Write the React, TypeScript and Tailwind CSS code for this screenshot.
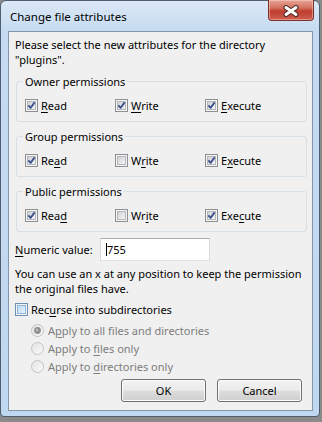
import React from 'react';

type Perm = { pre: string; key: string; post: string; checked: boolean };

const groups: { title: string; perms: Perm[] }[] = [
  {
    title: 'Owner permissions',
    perms: [
      { pre: '', key: 'R', post: 'ead', checked: true },
      { pre: '', key: 'W', post: 'rite', checked: true },
      { pre: '', key: 'E', post: 'xecute', checked: true },
    ],
  },
  {
    title: 'Group permissions',
    perms: [
      { pre: 'Re', key: 'a', post: 'd', checked: true },
      { pre: 'W', key: 'r', post: 'ite', checked: false },
      { pre: 'E', key: 'x', post: 'ecute', checked: true },
    ],
  },
  {
    title: 'Public permissions',
    perms: [
      { pre: 'Rea', key: 'd', post: '', checked: true },
      { pre: 'Wr', key: 'i', post: 'te', checked: false },
      { pre: 'Exe', key: 'c', post: 'ute', checked: true },
    ],
  },
];

// Windows 7 style checkbox glyph
function CheckBox({ checked, hot = false }: { checked: boolean; hot?: boolean }) {
  const id = hot ? 'cbHot' : 'cbNorm';
  return (
    <svg width="13" height="13" viewBox="0 0 13 13" className="shrink-0">
      <defs>
        <linearGradient id={id} x1="0" y1="0" x2="1" y2="1">
          <stop offset="0" stopColor={hot ? '#b9d9f4' : '#cdd0d5'} />
          <stop offset="1" stopColor={hot ? '#eaf4fd' : '#f8f8f8'} />
        </linearGradient>
      </defs>
      <rect x="0.5" y="0.5" width="12" height="12" fill="#f5f5f5" stroke={hot ? '#6f8fb4' : '#8e8f8f'} />
      <rect x="2.5" y="2.5" width="8" height="8" fill={`url(#${id})`} stroke={hot ? '#8fb4d8' : '#b4b7bc'} />
      {checked && (
        <path d="M3.4 6.4 L5.6 8.9 L9.6 3.4" fill="none" stroke="#3b4f8a" strokeWidth="1.8" strokeLinejoin="round" />
      )}
    </svg>
  );
}

// disabled radio glyph
function Radio({ selected }: { selected: boolean }) {
  return (
    <svg width="13" height="13" viewBox="0 0 13 13" className="shrink-0">
      <defs>
        <linearGradient id="rdDis" x1="0" y1="0" x2="1" y2="1">
          <stop offset="0" stopColor="#e2e2e2" />
          <stop offset="1" stopColor="#fbfbfb" />
        </linearGradient>
      </defs>
      <circle cx="6.5" cy="6.5" r="6" fill="url(#rdDis)" stroke="#c3c3c3" />
      {selected && (
        <>
          <circle cx="6.5" cy="6.5" r="3.4" fill="#8f8f8f" />
          <circle cx="6" cy="6" r="1.4" fill="#b9b9b9" />
        </>
      )}
    </svg>
  );
}

function WinButton({ label }: { label: string }) {
  return (
    <button className="w-[85px] h-[23px] rounded-[3px] border border-[#707070] bg-[linear-gradient(#f2f2f2_0%,#ebebeb_48%,#dddddd_52%,#cfcfcf_100%)] shadow-[inset_0_0_0_1px_#fcfcfc] text-black leading-[15px]">
      {label}
    </button>
  );
}

export default function App() {
  return (
    <div className="w-[322px] h-[422px] bg-[#8a8a8a] overflow-hidden font-['Noto_Sans',sans-serif] text-[11px] leading-[15px] text-black">
      <div className="w-[320px] h-[417px] rounded-t-[6px] rounded-b-[4px] border border-[#4f5d6e] bg-[linear-gradient(#dbe8f6,#c6dbf1_30px,#bfd7f0)] flex flex-col">
        {/* Title bar */}
        <div className="h-[30px] shrink-0 flex items-start justify-between">
          <span className="pl-[9px] pt-[8px] text-[11.5px]">Change file attributes</span>
          <div className="-mt-[1px] mr-[5px] w-[46px] h-[21px] rounded-b-[4px] border border-t-0 border-[#7b3028] bg-[linear-gradient(#e8a597_0%,#d2705f_40%,#c03d2f_55%,#cc5e4e_100%)] shadow-[inset_0_0_0_1px_rgba(255,220,210,0.45)] flex items-center justify-center">
            <svg width="16" height="12" viewBox="0 0 16 12" className="mt-[2px]">
              <path d="M3 2.5 L13 9.5 M13 2.5 L3 9.5" stroke="#4a2a26" strokeWidth="5" strokeLinecap="round" />
              <path d="M3 2.5 L13 9.5 M13 2.5 L3 9.5" stroke="#ffffff" strokeWidth="3" strokeLinecap="round" />
            </svg>
          </div>
        </div>

        {/* Client area */}
        <div className="ml-[7px] mr-[6px] mb-[5px] flex-1 min-h-0 border border-[#8496aa] bg-[#f0f0f0] pt-[5px] pl-[6px] pr-[5px] flex flex-col">
          <p>
            Please select the new attributes for the directory
            <br />"plugins".
          </p>

          {groups.map((g) => (
            <fieldset
              key={g.title}
              className="mt-[7px] ml-[1px] rounded-[3px] border border-[#d5dfe5] pl-[8px] pt-[9px] pb-[8px]"
            >
              <legend className="-ml-[2px] px-[2px] leading-[15px]">{g.title}</legend>
              <div className="flex h-[15px] items-center">
                {g.perms.map((p) => (
                  <label key={p.pre + p.key + p.post} className="w-[90px] flex items-center gap-[3px]">
                    <CheckBox checked={p.checked} />
                    <span>
                      {p.pre}
                      <u className="underline-offset-2">{p.key}</u>
                      {p.post}
                    </span>
                  </label>
                ))}
              </div>
            </fieldset>
          ))}

          <div className="mt-[6px] flex items-center h-[23px]">
            <span className="w-[85px]">
              <u className="underline-offset-2">N</u>umeric value:
            </span>
            <div className="w-[110px] h-[23px] border border-[#abadb3] border-l-[#d5d9e0] border-r-[#d5d9e0] border-b-[#e0e4ea] bg-white flex items-center pl-[5px]">
              <span className="w-[1px] h-[13px] bg-black" />
              <span>755</span>
            </div>
          </div>

          <p className="mt-[5px]">
            You can use an x at any position to keep the permission
            <br />
            the original files have.
          </p>

          <label className="mt-[6px] flex items-center gap-[3px] h-[15px]">
            <CheckBox checked={false} hot />
            <span>
              Rec<u className="underline-offset-2">u</u>rse into subdirectories
            </span>
          </label>

          <div className="mt-[4px] ml-[16px] flex flex-col text-[#7d7d7d]">
            <div className="h-[18px] flex items-center gap-[4px]">
              <Radio selected />
              <span>
                A<u className="underline-offset-2">p</u>ply to all files and directories
              </span>
            </div>
            <div className="h-[18px] flex items-center gap-[4px]">
              <Radio selected={false} />
              <span>
                Apply to <u className="underline-offset-2">f</u>iles only
              </span>
            </div>
            <div className="h-[18px] flex items-center gap-[4px]">
              <Radio selected={false} />
              <span>
                Apply to <u className="underline-offset-2">d</u>irectories only
              </span>
            </div>
          </div>

          <div className="mt-[4px] flex justify-end gap-[11px] pr-[5px]">
            <WinButton label="OK" />
            <WinButton label="Cancel" />
          </div>
        </div>
      </div>
    </div>
  );
}
